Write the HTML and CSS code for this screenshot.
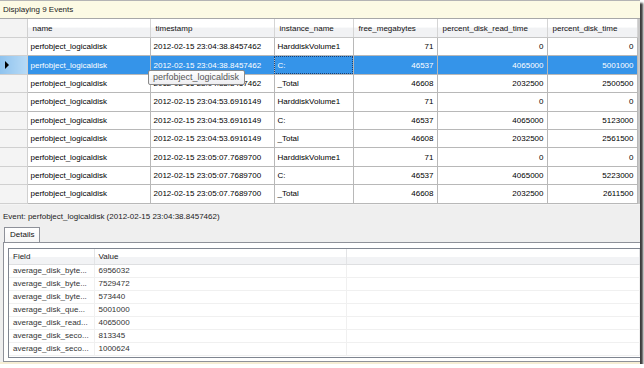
FILE: index.html
```html
<!DOCTYPE html>
<html lang="en">
<head>
    <meta charset="UTF-8">
    <title>Displaying 9 Events</title>
    <link rel="stylesheet" href="styles.css">
</head>
<body>
    <div class="window">
        <div class="status">Displaying 9 Events</div>

        <!-- event grid -->
        <div class="grid-wrap">
            <table class="grid">
                <colgroup>
                    <col style="width:27px">
                    <col style="width:123px">
                    <col style="width:124px">
                    <col style="width:79px">
                    <col style="width:84px">
                    <col style="width:110px">
                    <col style="width:90px">
                </colgroup>
                <thead>
                    <tr>
                        <th class="rh"></th>
                        <th>name</th>
                        <th>timestamp</th>
                        <th>instance_name</th>
                        <th>free_megabytes</th>
                        <th>percent_disk_read_time</th>
                        <th>percent_disk_time</th>
                    </tr>
                </thead>
                <tbody>
                    <tr>
                        <td class="rh"></td>
                        <td>perfobject_logicaldisk</td>
                        <td>2012-02-15 23:04:38.8457462</td>
                        <td>HarddiskVolume1</td>
                        <td class="num">71</td>
                        <td class="num">0</td>
                        <td class="num">0</td>
                    </tr>
                    <tr class="selected">
                        <td class="rh"><span class="arrow"></span></td>
                        <td>perfobject_logicaldisk</td>
                        <td>2012-02-15 23:04:38.8457462</td>
                        <td class="focus">C:</td>
                        <td class="num">46537</td>
                        <td class="num">4065000</td>
                        <td class="num">5001000</td>
                    </tr>
                    <tr>
                        <td class="rh"></td>
                        <td>perfobject_logicaldisk</td>
                        <td>2012-02-15 23:04:38.8457462</td>
                        <td>_Total</td>
                        <td class="num">46608</td>
                        <td class="num">2032500</td>
                        <td class="num">2500500</td>
                    </tr>
                    <tr>
                        <td class="rh"></td>
                        <td>perfobject_logicaldisk</td>
                        <td>2012-02-15 23:04:53.6916149</td>
                        <td>HarddiskVolume1</td>
                        <td class="num">71</td>
                        <td class="num">0</td>
                        <td class="num">0</td>
                    </tr>
                    <tr>
                        <td class="rh"></td>
                        <td>perfobject_logicaldisk</td>
                        <td>2012-02-15 23:04:53.6916149</td>
                        <td>C:</td>
                        <td class="num">46537</td>
                        <td class="num">4065000</td>
                        <td class="num">5123000</td>
                    </tr>
                    <tr>
                        <td class="rh"></td>
                        <td>perfobject_logicaldisk</td>
                        <td>2012-02-15 23:04:53.6916149</td>
                        <td>_Total</td>
                        <td class="num">46608</td>
                        <td class="num">2032500</td>
                        <td class="num">2561500</td>
                    </tr>
                    <tr>
                        <td class="rh"></td>
                        <td>perfobject_logicaldisk</td>
                        <td>2012-02-15 23:05:07.7689700</td>
                        <td>HarddiskVolume1</td>
                        <td class="num">71</td>
                        <td class="num">0</td>
                        <td class="num">0</td>
                    </tr>
                    <tr>
                        <td class="rh"></td>
                        <td>perfobject_logicaldisk</td>
                        <td>2012-02-15 23:05:07.7689700</td>
                        <td>C:</td>
                        <td class="num">46537</td>
                        <td class="num">4065000</td>
                        <td class="num">5223000</td>
                    </tr>
                    <tr>
                        <td class="rh"></td>
                        <td>perfobject_logicaldisk</td>
                        <td>2012-02-15 23:05:07.7689700</td>
                        <td>_Total</td>
                        <td class="num">46608</td>
                        <td class="num">2032500</td>
                        <td class="num">2611500</td>
                    </tr>
                </tbody>
            </table>
            <div class="tip">perfobject_logicaldisk</div>
        </div>

        <!-- selected event details -->
        <div class="lower">
            <div class="event">Event: perfobject_logicaldisk (2012-02-15 23:04:38.8457462)</div>
            <div class="tabs"><span class="tab">Details</span></div>
            <div class="panel">
                <div class="list">
                    <table>
                        <colgroup>
                            <col style="width:85px">
                            <col style="width:252px">
                            <col>
                        </colgroup>
                        <thead>
                            <tr><th>Field</th><th>Value</th><th></th></tr>
                        </thead>
                        <tbody>
                            <tr><td>average_disk_byte...</td><td>6956032</td><td></td></tr>
                            <tr><td>average_disk_byte...</td><td>7529472</td><td></td></tr>
                            <tr><td>average_disk_byte...</td><td>573440</td><td></td></tr>
                            <tr><td>average_disk_que...</td><td>5001000</td><td></td></tr>
                            <tr><td>average_disk_read...</td><td>4065000</td><td></td></tr>
                            <tr><td>average_disk_seco...</td><td>813345</td><td></td></tr>
                            <tr><td>average_disk_seco...</td><td>1000624</td><td></td></tr>
                        </tbody>
                    </table>
                </div>
            </div>
        </div>
    </div>
</body>
</html>
```

FILE: styles.css
```css
body {
    margin: 0;
    background-color: #fff;
    font-family: "Liberation Sans", Arial, sans-serif;
    font-size: 8px;
    color: #000;
}
.window {
    width: 640px;
    height: 364px;
    background-color: #efefef;
    border-top: 1px solid #b4b4b4;
    box-sizing: border-box;
    box-shadow: 3px 3px 2px #3c3c3c;
    border-bottom: 2px solid #f6eed4;
    display: flex;
    flex-direction: column;
    overflow: hidden;
}
.status {
    height: 17px;
    line-height: 17px;
    padding-left: 3px;
    background-color: #fcfae4;
    border-bottom: 1px solid #a8a8a8;
    color: #222;
}

/* grid */
.grid-wrap {
    position: relative;
    width: 637px;
    border-right: 3px solid #c8c8c8;
}
.grid {
    width: 637px;
    table-layout: fixed;
    border-collapse: collapse;
}
.grid th {
    height: 18px;
    padding: 0 0 0 5px;
    text-align: left;
    font-weight: normal;
    color: #111;
    background: linear-gradient(#ffffff, #ffffff 45%, #f1f2f4 50%, #f1f2f4);
    border-right: 1px solid #d5d5d5;
    border-bottom: 1px solid #c6c6c6;
    white-space: nowrap;
    overflow: hidden;
}
.grid th.rh {
    background: #f3f3f3;
}
.grid td {
    height: 17.4px;
    padding: 0 3px;
    background-color: #fff;
    border: 1px solid #b8b8b8;
    white-space: nowrap;
    overflow: hidden;
}
.grid td.num {
    text-align: right;
}
.grid .rh {
    padding: 0;
    background: #f4f4f4;
    border-color: #d0d0d0;
    border-left: none;
}
.grid .selected td {
    background-color: #3594e9;
    color: #fff;
}
.grid .selected td.rh {
    background: linear-gradient(to right, #8fc3ee, #b7daf6);
}
.grid td.focus {
    outline: 1px dotted #1b3f72;
    outline-offset: -1px;
}
.arrow {
    display: block;
    width: 0;
    height: 0;
    margin-left: 5px;
    border-top: 4px solid transparent;
    border-bottom: 4px solid transparent;
    border-left: 4px solid #000;
}
.tip {
    position: absolute;
    left: 148px;
    top: 51px;
    width: 87px;
    padding: 0 4px;
    height: 13px;
    line-height: 13px;
    font-size: 9px;
    color: #575757;
    background: linear-gradient(#ffffff, #eeeef2);
    border: 1px solid #8a8a8a;
    border-radius: 2px;
}

/* lower part */
.lower {
    flex: 1;
    display: flex;
    flex-direction: column;
    padding: 0 0 0 3px;
    border-top: 1px solid #f4f4f4;
}
.event {
    height: 22px;
    line-height: 10px;
    padding-top: 7px;
    box-sizing: border-box;
    color: #222;
}
.tabs {
    display: flex;
    padding-left: 1px;
}
.tab {
    height: 14px;
    line-height: 14px;
    padding: 0 5px;
    background: linear-gradient(#ffffff, #f6f6f6);
    border: 1px solid #8e9199;
    border-bottom: none;
    color: #111;
}
.panel {
    flex: 1;
    padding: 5px 0 3px 4px;
    background-color: #fff;
    border: 1px solid #8e9199;
    border-right: none;
    display: flex;
    flex-direction: column;
}
.list {
    flex: 1;
    overflow: hidden;
    border: 1px solid #7f8590;
    border-right: none;
    background-color: #fff;
}
.list table {
    width: 100%;
    table-layout: fixed;
    border-collapse: collapse;
}
.list th {
    height: 15px;
    padding: 0 0 0 4px;
    text-align: left;
    font-weight: normal;
    color: #222;
    background: linear-gradient(#ffffff, #ffffff 50%, #f2f3f5 52%, #f2f3f5);
    border-right: 1px solid #e3e4e6;
    border-bottom: 1px solid #dedfe1;
}
.list td {
    height: 12px;
    padding: 0 0 0 4px;
    color: #333;
    border-right: 1px solid #f0f0f0;
    border-bottom: 1px solid #f0f0f0;
    white-space: nowrap;
    overflow: hidden;
}
```
